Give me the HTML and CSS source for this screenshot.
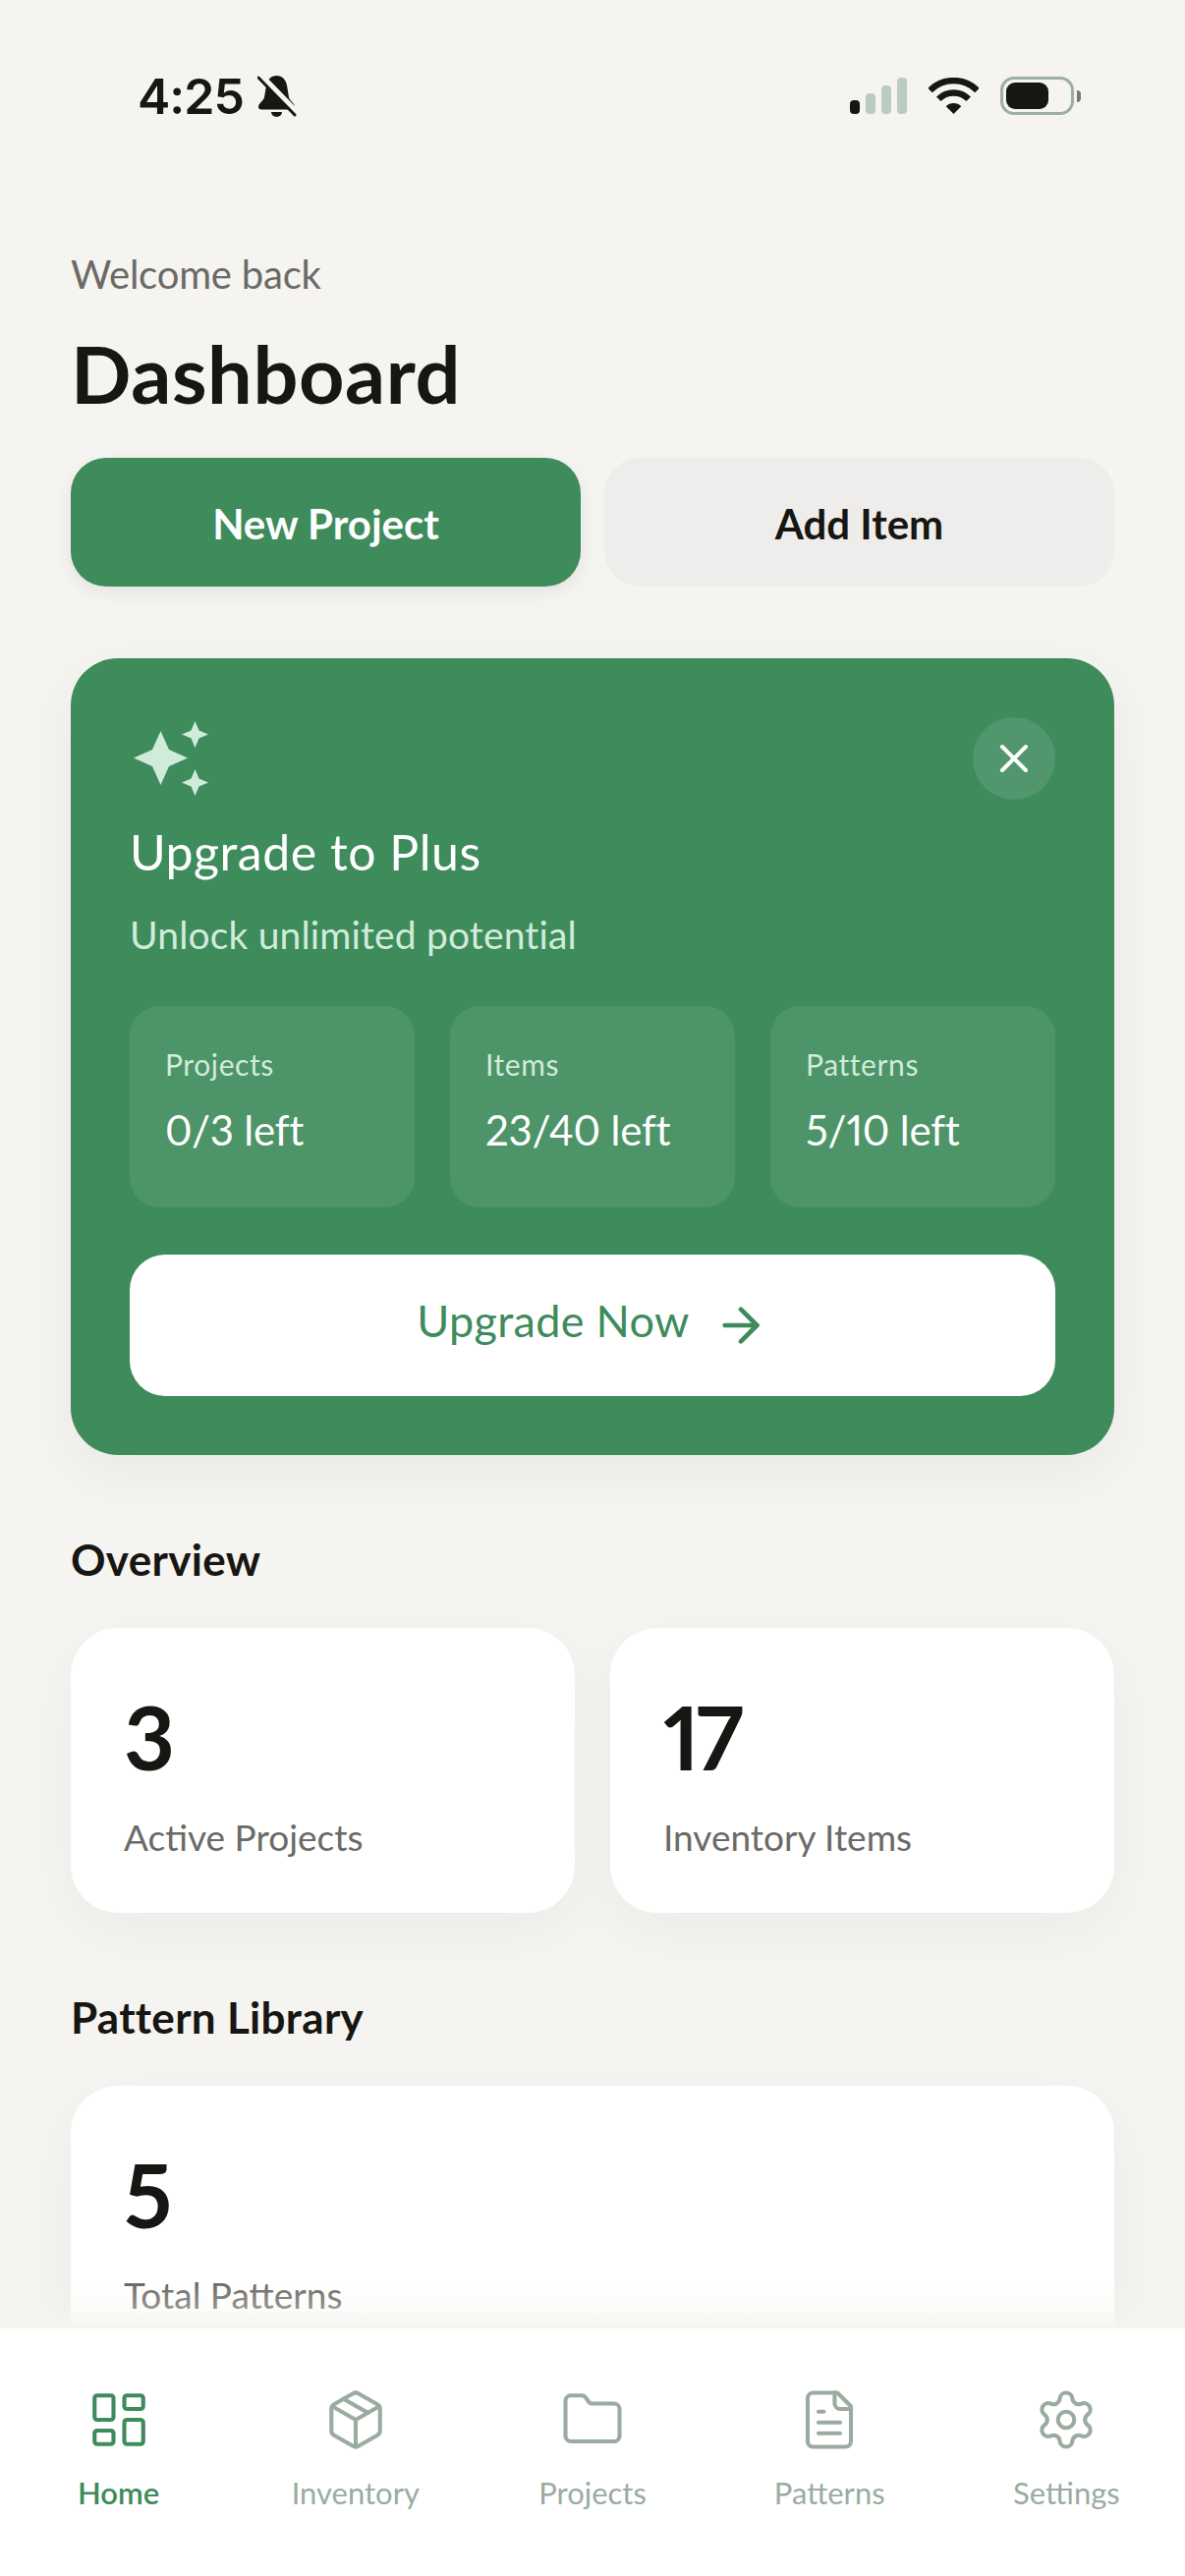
FILE: index.html
```html
<!DOCTYPE html>
<html lang="en">
<head>
    <meta charset="UTF-8">
    <meta name="viewport" content="width=device-width, initial-scale=1.0">
    <title>Dashboard</title>
    <link rel="stylesheet" href="styles.css">
</head>
<body>
    <div class="content">
        <div class="status-bar">
            <div class="status-left">
                <span class="time">4:25</span>
                <svg class="bell" viewBox="0 0 40 42">
                    <path d="M19.5 0C25 0 29 4 30 10L32 22C33 26 38 28 38 32C38 34 36 34.5 34 34.5H5C3 34.5 1 34 1 32C1 28 6 26 7 22L9 10C10 4 14 0 19.5 0Z" fill="#171612"/>
                    <path d="M14 37a5.5 5 0 0 0 11 0z" fill="#171612"/>
                    <path d="M2 -1L42 40" stroke="#f5f4f0" stroke-width="7"/>
                    <path d="M1 2L38 40" stroke="#171612" stroke-width="3" stroke-linecap="round"/>
                </svg>
            </div>
            <div class="status-right">
                <div class="signal">
                    <span class="bar bar-1 on"></span>
                    <span class="bar bar-2"></span>
                    <span class="bar bar-3"></span>
                    <span class="bar bar-4"></span>
                </div>
                <svg class="wifi" viewBox="0 0 51 37" fill="none" stroke="#171612" stroke-width="6.5">
                    <path d="M1.5 13A34 34 0 0 1 49.5 13"/>
                    <path d="M10.3 21.8A21.5 21.5 0 0 1 40.7 21.8"/>
                    <path d="M25.5 37L17.7 29.2A11 11 0 0 1 33.3 29.2Z" fill="#171612" stroke="none"/>
                </svg>
                <div class="battery">
                    <div class="battery-level"></div>
                </div>
                <div class="battery-nub"></div>
            </div>
        </div>

        <div class="page">
            <div class="welcome">Welcome back</div>
            <h1 class="title">Dashboard</h1>

            <div class="actions">
                <div class="action primary">New Project</div>
                <div class="action secondary">Add Item</div>
            </div>

            <div class="upgrade-card">
                <div class="upgrade-head">
                    <svg class="sparkles" viewBox="0 0 84 85" fill="#d1ebdb">
                        <polygon points="31.5,14 40,33 59,41.5 40,50 31.5,69 23,50 4,41.5 23,33"/>
                        <polygon points="66.5,4 70.5,13.5 80,17.5 70.5,21.5 66.5,31 62.5,21.5 53,17.5 62.5,13.5"/>
                        <polygon points="66.5,53 70.5,62.5 80,66.5 70.5,70.5 66.5,80 62.5,70.5 53,66.5 62.5,62.5"/>
                    </svg>
                    <div class="close-button">
                        <svg class="icon-close" viewBox="0 0 24 24" fill="none" stroke="#fff" stroke-width="2" stroke-linecap="round">
                            <path d="M18 6 6 18"/>
                            <path d="m6 6 12 12"/>
                        </svg>
                    </div>
                </div>
                <div class="upgrade-title">Upgrade to Plus</div>
                <div class="upgrade-sub">Unlock unlimited potential</div>

                <div class="limits">
                    <div class="limit">
                        <div class="limit-label">Projects</div>
                        <div class="limit-value">0/3 left</div>
                    </div>
                    <div class="limit">
                        <div class="limit-label">Items</div>
                        <div class="limit-value">23/40 left</div>
                    </div>
                    <div class="limit">
                        <div class="limit-label">Patterns</div>
                        <div class="limit-value">5/10 left</div>
                    </div>
                </div>

                <div class="upgrade-button">
                    <span class="upgrade-text">Upgrade Now</span>
                    <svg class="icon-arrow" viewBox="0 0 24 24" fill="none" stroke="#3e8b5c" stroke-width="2" stroke-linecap="round" stroke-linejoin="round">
                        <path d="M5 12h14"/>
                        <path d="m12 5 7 7-7 7"/>
                    </svg>
                </div>
            </div>

            <h2 class="section-title">Overview</h2>
            <div class="stats">
                <div class="stat-card">
                    <div class="stat-number">3</div>
                    <div class="stat-label">Active Projects</div>
                </div>
                <div class="stat-card">
                    <div class="stat-number">17</div>
                    <div class="stat-label">Inventory Items</div>
                </div>
            </div>

            <h2 class="section-title">Pattern Library</h2>
            <div class="stats">
                <div class="stat-card">
                    <div class="stat-number">5</div>
                    <div class="stat-label">Total Patterns</div>
                </div>
            </div>
        </div>

        <div class="fade"></div>
    </div>

    <nav class="tab-bar">
        <div class="tab active">
            <svg class="tab-icon" viewBox="0 0 24 24">
                <rect x="3" y="3" width="7" height="9" rx="1"/>
                <rect x="14" y="3" width="7" height="5" rx="1"/>
                <rect x="14" y="12" width="7" height="9" rx="1"/>
                <rect x="3" y="16" width="7" height="5" rx="1"/>
            </svg>
            <span>Home</span>
        </div>
        <div class="tab">
            <svg class="tab-icon" viewBox="0 0 24 24">
                <path d="m7.5 4.27 9 5.15"/>
                <path d="M21 8a2 2 0 0 0-1-1.73l-7-4a2 2 0 0 0-2 0l-7 4A2 2 0 0 0 3 8v8a2 2 0 0 0 1 1.73l7 4a2 2 0 0 0 2 0l7-4A2 2 0 0 0 21 16Z"/>
                <path d="m3.3 7 8.7 5 8.7-5"/>
                <path d="M12 22V12"/>
            </svg>
            <span>Inventory</span>
        </div>
        <div class="tab">
            <svg class="tab-icon" viewBox="0 0 24 24">
                <path d="M20 20a2 2 0 0 0 2-2V8a2 2 0 0 0-2-2h-7.9a2 2 0 0 1-1.69-.9L9.6 3.9A2 2 0 0 0 7.93 3H4a2 2 0 0 0-2 2v13a2 2 0 0 0 2 2Z"/>
            </svg>
            <span>Projects</span>
        </div>
        <div class="tab">
            <svg class="tab-icon" viewBox="0 0 24 24">
                <path d="M15 2H6a2 2 0 0 0-2 2v16a2 2 0 0 0 2 2h12a2 2 0 0 0 2-2V7Z"/>
                <path d="M14 2v4a2 2 0 0 0 2 2h4"/>
                <path d="M10 9H8"/>
                <path d="M16 13H8"/>
                <path d="M16 17H8"/>
            </svg>
            <span>Patterns</span>
        </div>
        <div class="tab">
            <svg class="tab-icon" viewBox="0 0 24 24">
                <path d="M9.671 4.136a2.34 2.34 0 0 1 4.659 0 2.34 2.34 0 0 0 3.319 1.915 2.34 2.34 0 0 1 2.33 4.033 2.34 2.34 0 0 0 0 3.831 2.34 2.34 0 0 1-2.33 4.033 2.34 2.34 0 0 0-3.319 1.915 2.34 2.34 0 0 1-4.659 0 2.34 2.34 0 0 0-3.32-1.915 2.34 2.34 0 0 1-2.33-4.033 2.34 2.34 0 0 0 0-3.831A2.34 2.34 0 0 1 6.35 6.051a2.34 2.34 0 0 0 3.319-1.915"/>
                <circle cx="12" cy="12" r="3"/>
            </svg>
            <span>Settings</span>
        </div>
    </nav>
</body>
</html>
```

FILE: styles.css
```css
body {
    font-family: Lato, "Open Sans", sans-serif;
    background-color: #f5f4f0;
    color: #171612;
    margin: 0;
    height: 100vh;
    overflow: hidden;
    display: flex;
    flex-direction: column;
}

.content {
    flex: 1;
    min-height: 0;
    overflow: hidden;
    position: relative;
}

/* status bar */
.status-bar {
    height: 148px;
    box-sizing: border-box;
    padding: 77px 106px 0 140px;
    display: flex;
    justify-content: space-between;
    align-items: flex-start;
}

.status-left {
    display: flex;
    align-items: center;
    gap: 14px;
}

.time {
    font-family: Inter, sans-serif;
    font-size: 50px;
    font-weight: 600;
    line-height: 42px;
    letter-spacing: -1px;
}

.bell {
    width: 40px;
    height: 42px;
}

.status-right {
    display: flex;
    align-items: flex-start;
}

.signal {
    display: flex;
    align-items: flex-end;
    gap: 6px;
    height: 37px;
    margin-top: 2px;
}

.bar {
    width: 10px;
    background-color: #bbcbc1;
    border-radius: 4px;
}

.bar.on {
    background-color: #171612;
}

.bar-1 { height: 14px; }
.bar-2 { height: 21px; }
.bar-3 { height: 29px; }
.bar-4 { height: 37px; }

.wifi {
    width: 51px;
    height: 37px;
    margin: 2px 22px 0 22px;
}

.battery {
    width: 75px;
    height: 39px;
    box-sizing: border-box;
    border: 3px solid #9dafa3;
    border-radius: 14px;
    padding: 3px;
    margin-top: 1px;
}

.battery-level {
    width: 43px;
    height: 100%;
    background-color: #171612;
    border-radius: 9px;
}

.battery-nub {
    width: 4px;
    height: 12px;
    background-color: #777;
    border-radius: 0 4px 4px 0;
    margin: 15px 0 0 3px;
}

/* page */
.page {
    padding: 0 72px;
}

.welcome {
    margin-top: 105px;
    font-size: 40px;
    line-height: 52px;
    letter-spacing: -0.2px;
    color: #6b6a66;
}

.title {
    margin: 25px 0 0;
    font-size: 81px;
    line-height: 100px;
    font-weight: 700;
    letter-spacing: 0.6px;
}

.actions {
    display: flex;
    gap: 24px;
    margin-top: 36px;
}

.action {
    flex: 1;
    height: 131px;
    box-sizing: border-box;
    padding-top: 2px;
    border-radius: 36px;
    display: flex;
    justify-content: center;
    align-items: center;
    font-size: 42px;
    font-weight: 700;
}

.action.primary {
    background-color: #3e8b5c;
    color: white;
    box-shadow: 0 6px 18px rgba(0, 0, 0, 0.07);
}

.action.secondary {
    background-color: #eeedeb;
}

/* upgrade card */
.upgrade-card {
    margin-top: 73px;
    padding: 60px;
    background-color: #3e8b5c;
    border-radius: 48px;
    color: white;
    box-shadow: 0 18px 60px rgba(0, 0, 0, 0.05);
}

.upgrade-head {
    display: flex;
    justify-content: space-between;
}

.sparkles {
    width: 84px;
    height: 85px;
}

.close-button {
    width: 84px;
    height: 84px;
    border-radius: 50%;
    background-color: rgba(255, 255, 255, 0.1);
    display: flex;
    justify-content: center;
    align-items: center;
}

.icon-close {
    width: 48px;
    height: 48px;
}

.upgrade-title {
    margin-top: 22px;
    font-size: 50px;
    line-height: 60px;
    letter-spacing: 0.5px;
}

.upgrade-sub {
    margin-top: 29px;
    font-size: 39px;
    line-height: 50px;
    letter-spacing: 0.15px;
    color: #d1ebdb;
}

.limits {
    display: flex;
    gap: 36px;
    margin-top: 48px;
}

.limit {
    flex: 1;
    height: 205px;
    box-sizing: border-box;
    padding: 39px 36px 0;
    background-color: rgba(255, 255, 255, 0.08);
    border-radius: 30px;
}

.limit-label {
    font-size: 30px;
    line-height: 40px;
    letter-spacing: 0.6px;
    color: #d1ebdb;
}

.limit-value {
    margin-top: 20px;
    font-size: 42px;
    line-height: 54px;
    letter-spacing: -0.2px;
    font-variant-numeric: proportional-nums;
}

.upgrade-button {
    margin-top: 48px;
    height: 144px;
    background-color: white;
    border-radius: 36px;
    display: flex;
    justify-content: center;
    align-items: center;
    gap: 24px;
    font-size: 45px;
    color: #3e8b5c;
}

.upgrade-text {
    margin-bottom: 10px;
    letter-spacing: 0.3px;
}

.icon-arrow {
    width: 56px;
    height: 56px;
}

/* sections */
.section-title {
    margin: 76px 0 0;
    font-size: 44px;
    line-height: 60px;
    font-weight: 700;
    letter-spacing: 0.3px;
}

.stats {
    display: flex;
    gap: 36px;
    margin-top: 40px;
}

.stat-card {
    flex: 1;
    height: 290px;
    box-sizing: border-box;
    padding: 60px 54px 0;
    background-color: white;
    border-radius: 48px;
    box-shadow: 0 18px 60px rgba(0, 0, 0, 0.04);
}

.stat-number {
    font-size: 90px;
    line-height: 100px;
    font-weight: 700;
    font-variant-numeric: proportional-nums;
    letter-spacing: -4px;
}

.stat-label {
    margin-top: 28px;
    font-size: 37px;
    line-height: 50px;
    color: #6b6a66;
}

.fade {
    position: absolute;
    left: 0;
    right: 0;
    bottom: 0;
    height: 46px;
    background: linear-gradient(rgba(245, 244, 240, 0), rgba(245, 244, 240, 0.3) 55%, #f5f4f0);
}

/* tab bar */
.tab-bar {
    height: 252px;
    flex-shrink: 0;
    background-color: white;
    display: flex;
    box-sizing: border-box;
    padding-top: 60px;
}

.tab {
    flex: 1;
    display: flex;
    flex-direction: column;
    align-items: center;
    gap: 21px;
    font-size: 31px;
    line-height: 40px;
    color: #9aaca0;
}

.tab.active {
    color: #3e8b5c;
    font-weight: 600;
}

.tab-icon {
    width: 66px;
    height: 66px;
    fill: none;
    stroke: currentColor;
    stroke-width: 1.5;
    stroke-linecap: round;
    stroke-linejoin: round;
}
```
